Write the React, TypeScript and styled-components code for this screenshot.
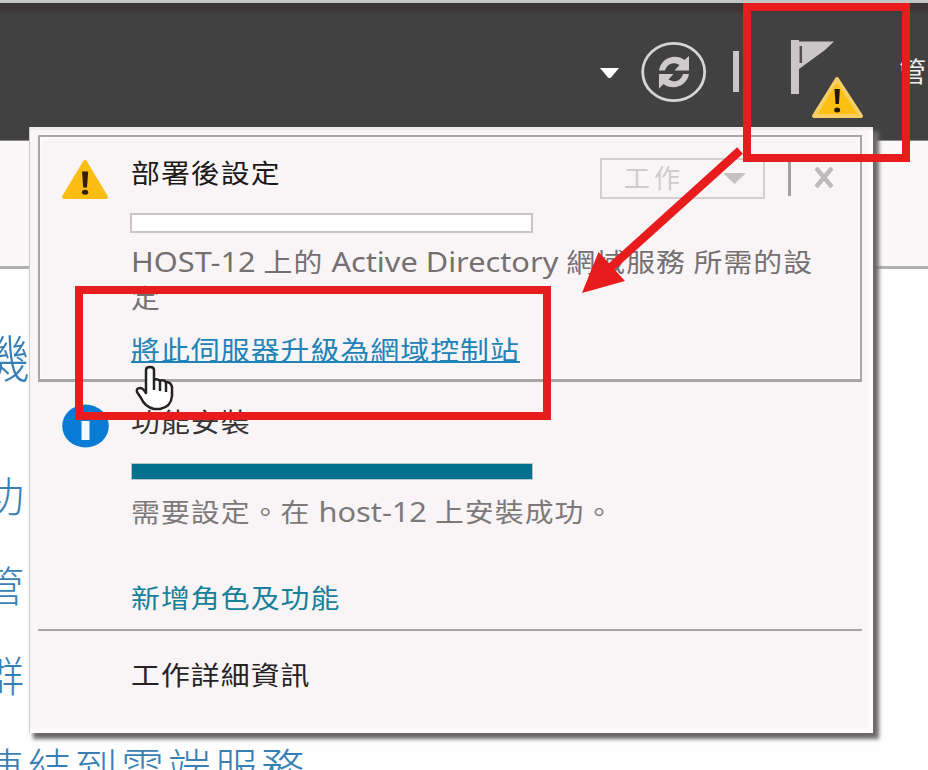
import React from "react";
import styled, { createGlobalStyle } from "styled-components";

const RED = "#e81c1c";
const CJK = `"Noto Sans", "Noto Sans CJK TC", sans-serif`;

const GlobalStyle = createGlobalStyle`
  * { box-sizing: border-box; }
  body { margin: 0; background: #fff; font-family: "Noto Sans CJK TC", sans-serif; }
`;

const Page = styled.div`
  position: relative;
  width: 928px;
  height: 770px;
  overflow: hidden;
  background: #fefefe;
  display: flex;
  flex-direction: column;
`;

const TopBar = styled.header`
  flex: none;
  height: 141px;
  display: flex;
  align-items: flex-start;
  padding-left: 600px;
  border-top: 3px solid #c3c6c6;
  border-bottom: 1px solid #8d8b8c;
  background: linear-gradient(#3b3536 0, #3b3536 7px, #414141 11px, #414141 100%);
`;

const Caret = styled.svg`
  flex: none;
  margin-top: 64px;
`;

const RefreshIcon = styled.svg`
  flex: none;
  margin: 38px 0 0 22px;
`;

const HeaderRule = styled.span`
  flex: none;
  width: 6px;
  height: 41px;
  margin: 48px 0 0 25px;
  background: #c9c7c8;
`;

const FlagIcon = styled.svg`
  flex: none;
  margin: 36px 0 0 51px;
`;

const MenuLabel = styled.span`
  flex: none;
  margin: 48px 0 0 31px;
  color: #f1eeee;
  font-size: 27px;
  line-height: 40px;
  letter-spacing: 3px;
  white-space: nowrap;
`;

const Band = styled.div`
  flex: none;
  height: 128px;
  background: #fbf8f9;
  border-bottom: 3px solid #b3b0b1;
`;

const Backdrop = styled.main`
  flex: 1;
  display: flex;
  flex-direction: column;
  padding-top: 2px;
  color: #397fb3;
  font-weight: 300;
`;

const BackLine = styled.div<{ $size: number; $height: number; $shift: number; $gap?: number }>`
  flex: none;
  height: ${(p) => p.$height}px;
  line-height: ${(p) => p.$height}px;
  font-size: ${(p) => p.$size}px;
  margin-left: ${(p) => p.$shift}px;
  letter-spacing: ${(p) => p.$gap ?? 0}px;
  white-space: nowrap;
`;

const Popup = styled.section`
  position: absolute;
  left: 29px;
  top: 127px;
  width: 844px;
  height: 606px;
  padding: 8px 11px 0 8px;
  background: #f9f5f7;
  border: 1px solid #cfcccd;
  border-width: 0 0 0 1px;
  box-shadow: inset 0 3px 0 #eeebec, inset -4px -4px 3px #fffdfe, 5px 5px 4px 1px #6d696a;
  display: flex;
  flex-direction: column;
`;

const Task = styled.article<{ $framed?: boolean }>`
  flex: none;
  height: ${(p) => (p.$framed ? 247 : 249)}px;
  display: grid;
  grid-template-columns: ${(p) => (p.$framed ? 70 : 69)}px 1fr;
  padding-left: ${(p) => (p.$framed ? 21 : 24)}px;
  border: ${(p) => (p.$framed ? "2px solid #aaa6a7" : "0 solid")};
  border-bottom: ${(p) => (p.$framed ? 3 : 2)}px solid #aaa6a7;
  ${(p) => (p.$framed ? "box-shadow: inset 0 0 0 2px #fdfafb;" : "")}
`;

const IconCell = styled.div<{ $top: number }>`
  padding-top: ${(p) => p.$top}px;
  line-height: 0;
`;

const TaskBody = styled.div`
  display: flex;
  flex-direction: column;
  align-items: flex-start;
  min-width: 0;
`;

const TitleRow = styled.div<{ $height: number }>`
  width: 100%;
  height: ${(p) => p.$height}px;
  display: flex;
  align-items: flex-start;
`;

const Label = styled.span<{ $tone: string; $top?: number; $link?: boolean }>`
  display: inline-block;
  flex: none;
  margin-top: ${(p) => p.$top ?? 0}px;
  color: ${(p) => p.$tone};
  font-size: 26px;
  line-height: 36px;
  letter-spacing: 0.95px;
  transform: scaleX(1.11);
  transform-origin: 0 50%;
  white-space: nowrap;
  ${(p) => (p.$link ? "text-decoration: underline; text-decoration-thickness: 2px; text-underline-offset: 1px;" : "")}
`;

const Latin = styled.span`
  font-family: ${CJK};
  font-size: 27.7px;
  line-height: 1;
  letter-spacing: 0;
`;

const Controls = styled.div`
  display: flex;
  align-items: flex-start;
  margin-left: auto;
  padding-right: 26px;
`;

const TaskButton = styled.button`
  width: 165px;
  height: 41px;
  margin-top: 21px;
  padding: 0 17px 0 22px;
  display: flex;
  align-items: center;
  justify-content: space-between;
  border: 2px solid #d3cfd1;
  background: transparent;
  color: #cfcbcd;
  font: 26px/34px "Noto Sans CJK TC", sans-serif;
  letter-spacing: 4px;
`;

const TaskButtonText = styled.span`
  margin-top: -4px;
`;

const ControlRule = styled.span`
  width: 3px;
  height: 37px;
  margin: 22px 0 0 23px;
  background: #a29fa0;
`;

const CloseIcon = styled.svg`
  margin: 30px 0 0 23px;
`;

const Progress = styled.div<{ $filled?: boolean }>`
  flex: none;
  width: ${(p) => (p.$filled ? 400 : 403)}px;
  height: ${(p) => (p.$filled ? 15 : 20)}px;
  margin-left: ${(p) => (p.$filled ? 1 : -1)}px;
  background: ${(p) => (p.$filled ? "#04708f" : "#fffefe")};
  border: ${(p) => (p.$filled ? "0" : "2px solid #c9c5c6")};
  box-shadow: ${(p) => (p.$filled ? "0 0 0 1px #b5c5ca" : "none")};
`;

const Footer = styled.footer`
  padding: 25px 0 0 93px;
`;

const Cursor = styled.svg`
  position: absolute;
  left: 134px;
  top: 364px;
`;

const Highlight = styled.div<{ $x: number; $y: number; $w: number; $h: number }>`
  position: absolute;
  left: ${(p) => p.$x}px;
  top: ${(p) => p.$y}px;
  width: ${(p) => p.$w}px;
  height: ${(p) => p.$h}px;
  border: 8px solid ${RED};
`;

const Arrow = styled.svg`
  position: absolute;
  left: 570px;
  top: 140px;
`;

const Warning = () => (
  <svg width="48" height="42" viewBox="0 0 48 42">
    <path d="M24 3 45 38H3Z" fill="#fcbd12" stroke="#fcbd12" strokeWidth="4" strokeLinejoin="round" />
    <path d="M21 12.500h6.200l-1.200 16h-3.800Z" fill="#33200a" />
    <ellipse cx="24.100" cy="33.300" rx="3.200" ry="2.500" fill="#33200a" />
  </svg>
);

const Info = () => (
  <svg width="48" height="44" viewBox="0 0 48 44">
    <ellipse cx="23.500" cy="22" rx="23.300" ry="21.500" fill="#087bd5" />
    <rect x="19.500" y="17" width="8" height="19" fill="#f2f9ff" />
    <rect x="19.500" y="9" width="8" height="5" fill="#f2f9ff" />
  </svg>
);

export default function App() {
  return (
    <>
      <GlobalStyle />
      <Page>
        <TopBar>
          <Caret width="19" height="12" viewBox="0 0 19 12">
            <path d="M0 1h19L11 10.500q-1.500 1-3 0Z" fill="#fff" />
          </Caret>
          <RefreshIcon width="67" height="62" viewBox="0 0 67 62">
            <ellipse cx="32.700" cy="31" rx="31" ry="28.700" fill="none" stroke="#d8d4d5" strokeWidth="2.800" />
            <path d="M18 29.500C20 17 34 12 43.500 19L48 15V29.500H33.500L38.500 24C32 20 26 23 24 29.500Z" fill="#cfcbcc" />
            <path d="M48 33C46 45 32 50 22.500 43L18 47.500V33H32.500L27.500 38.500C34 42.500 40 39.500 42 33Z" fill="#cfcbcc" />
          </RefreshIcon>
          <HeaderRule />
          <FlagIcon width="78" height="82" viewBox="0 0 78 82">
            <path d="M1 1H9V2.500H44L35 11 9 30V55H1Z" fill="#cbc7c8" />
            <path d="M10.800 7V24" stroke="#514d4e" strokeWidth="2.500" />
            <path d="M47 40 71 77H24Z" fill="#fcc012" stroke="#f7ce66" strokeWidth="4" strokeLinejoin="round" />
            <path d="M44.500 50h5.400l-1 15h-3.400Z" fill="#241706" />
            <ellipse cx="47.200" cy="71" rx="3" ry="2.500" fill="#241706" />
          </FlagIcon>
          <MenuLabel>管理</MenuLabel>
        </TopBar>
        <Band />
        <Backdrop>
          <BackLine $size={51} $height={170} $shift={-21}>機</BackLine>
          <BackLine $size={42} $height={106} $shift={-18}>功</BackLine>
          <BackLine $size={42} $height={74} $shift={-18}>管</BackLine>
          <BackLine $size={42} $height={106} $shift={-18}>群</BackLine>
          <BackLine $size={43} $height={78} $shift={-19} $gap={3.700}>連結到雲端服務</BackLine>
        </Backdrop>

        <Popup>
          <Task $framed>
            <IconCell $top={22}>
              <Warning />
            </IconCell>
            <TaskBody>
              <TitleRow $height={76}>
                <Label $tone="#1c191a" $top={17}>部署後設定</Label>
                <Controls>
                  <TaskButton>
                    <TaskButtonText>工作</TaskButtonText>
                    <svg width="23" height="11" viewBox="0 0 23 11">
                      <path d="M0 0H23L11.500 11Z" fill="#c5c1c3" />
                    </svg>
                  </TaskButton>
                  <ControlRule />
                  <CloseIcon width="20" height="21" viewBox="0 0 20 21">
                    <path d="M2 1 18 20M18 1 2 20" stroke="#bfbbbd" strokeWidth="4.500" />
                  </CloseIcon>
                </Controls>
              </TitleRow>
              <Progress />
              <Label $tone="#747072" $top={10}>
                <Latin>HOST-12 </Latin>上的<Latin> Active Directory </Latin>網域服務 所需的設
                <br />定
              </Label>
              <Label as="a" $tone="#2083b8" $top={16} $link>將此伺服器升級為網域控制站</Label>
            </TaskBody>
          </Task>
          <Task>
            <IconCell $top={22}>
              <Info />
            </IconCell>
            <TaskBody>
              <TitleRow $height={82}>
                <Label $tone="#343132" $top={21}>功能安裝</Label>
              </TitleRow>
              <Progress $filled />
              <Label $tone="#7c797a" $top={14}>
                需要設定。在<Latin> host-12 </Latin>上安裝成功。
              </Label>
              <Label as="a" $tone="#168198" $top={50}>新增角色及功能</Label>
            </TaskBody>
          </Task>
          <Footer>
            <Label $tone="#252223">工作詳細資訊</Label>
          </Footer>
        </Popup>

        <Cursor width="42" height="47" viewBox="0 0 42 47">
          <path
            d="M12 24V6Q12 3 16 3T20 6V16Q23 14 26 17Q29 15 32 18Q37 18 38 23V32Q37 43 26 45H20Q11 43 7 34L3 28Q2 24 6 24Q9 24 12 29Z"
            fill="#fff"
            stroke="#252223"
            strokeWidth="2.500"
            strokeLinejoin="round"
          />
          <path d="M20 16V26M26 17V27M32 18V28" stroke="#252223" strokeWidth="2.500" />
        </Cursor>

        <Highlight $x={743} $y={3} $w={167} $h={159} />
        <Highlight $x={75} $y={286} $w={476} $h={134} />
        <Arrow width="180" height="160" viewBox="0 0 180 160">
          <path d="M170 10.500 40 128" stroke={RED} strokeWidth="8.500" />
          <path d="M12 153 28.500 112 55 141Z" fill={RED} />
        </Arrow>
      </Page>
    </>
  );
}
